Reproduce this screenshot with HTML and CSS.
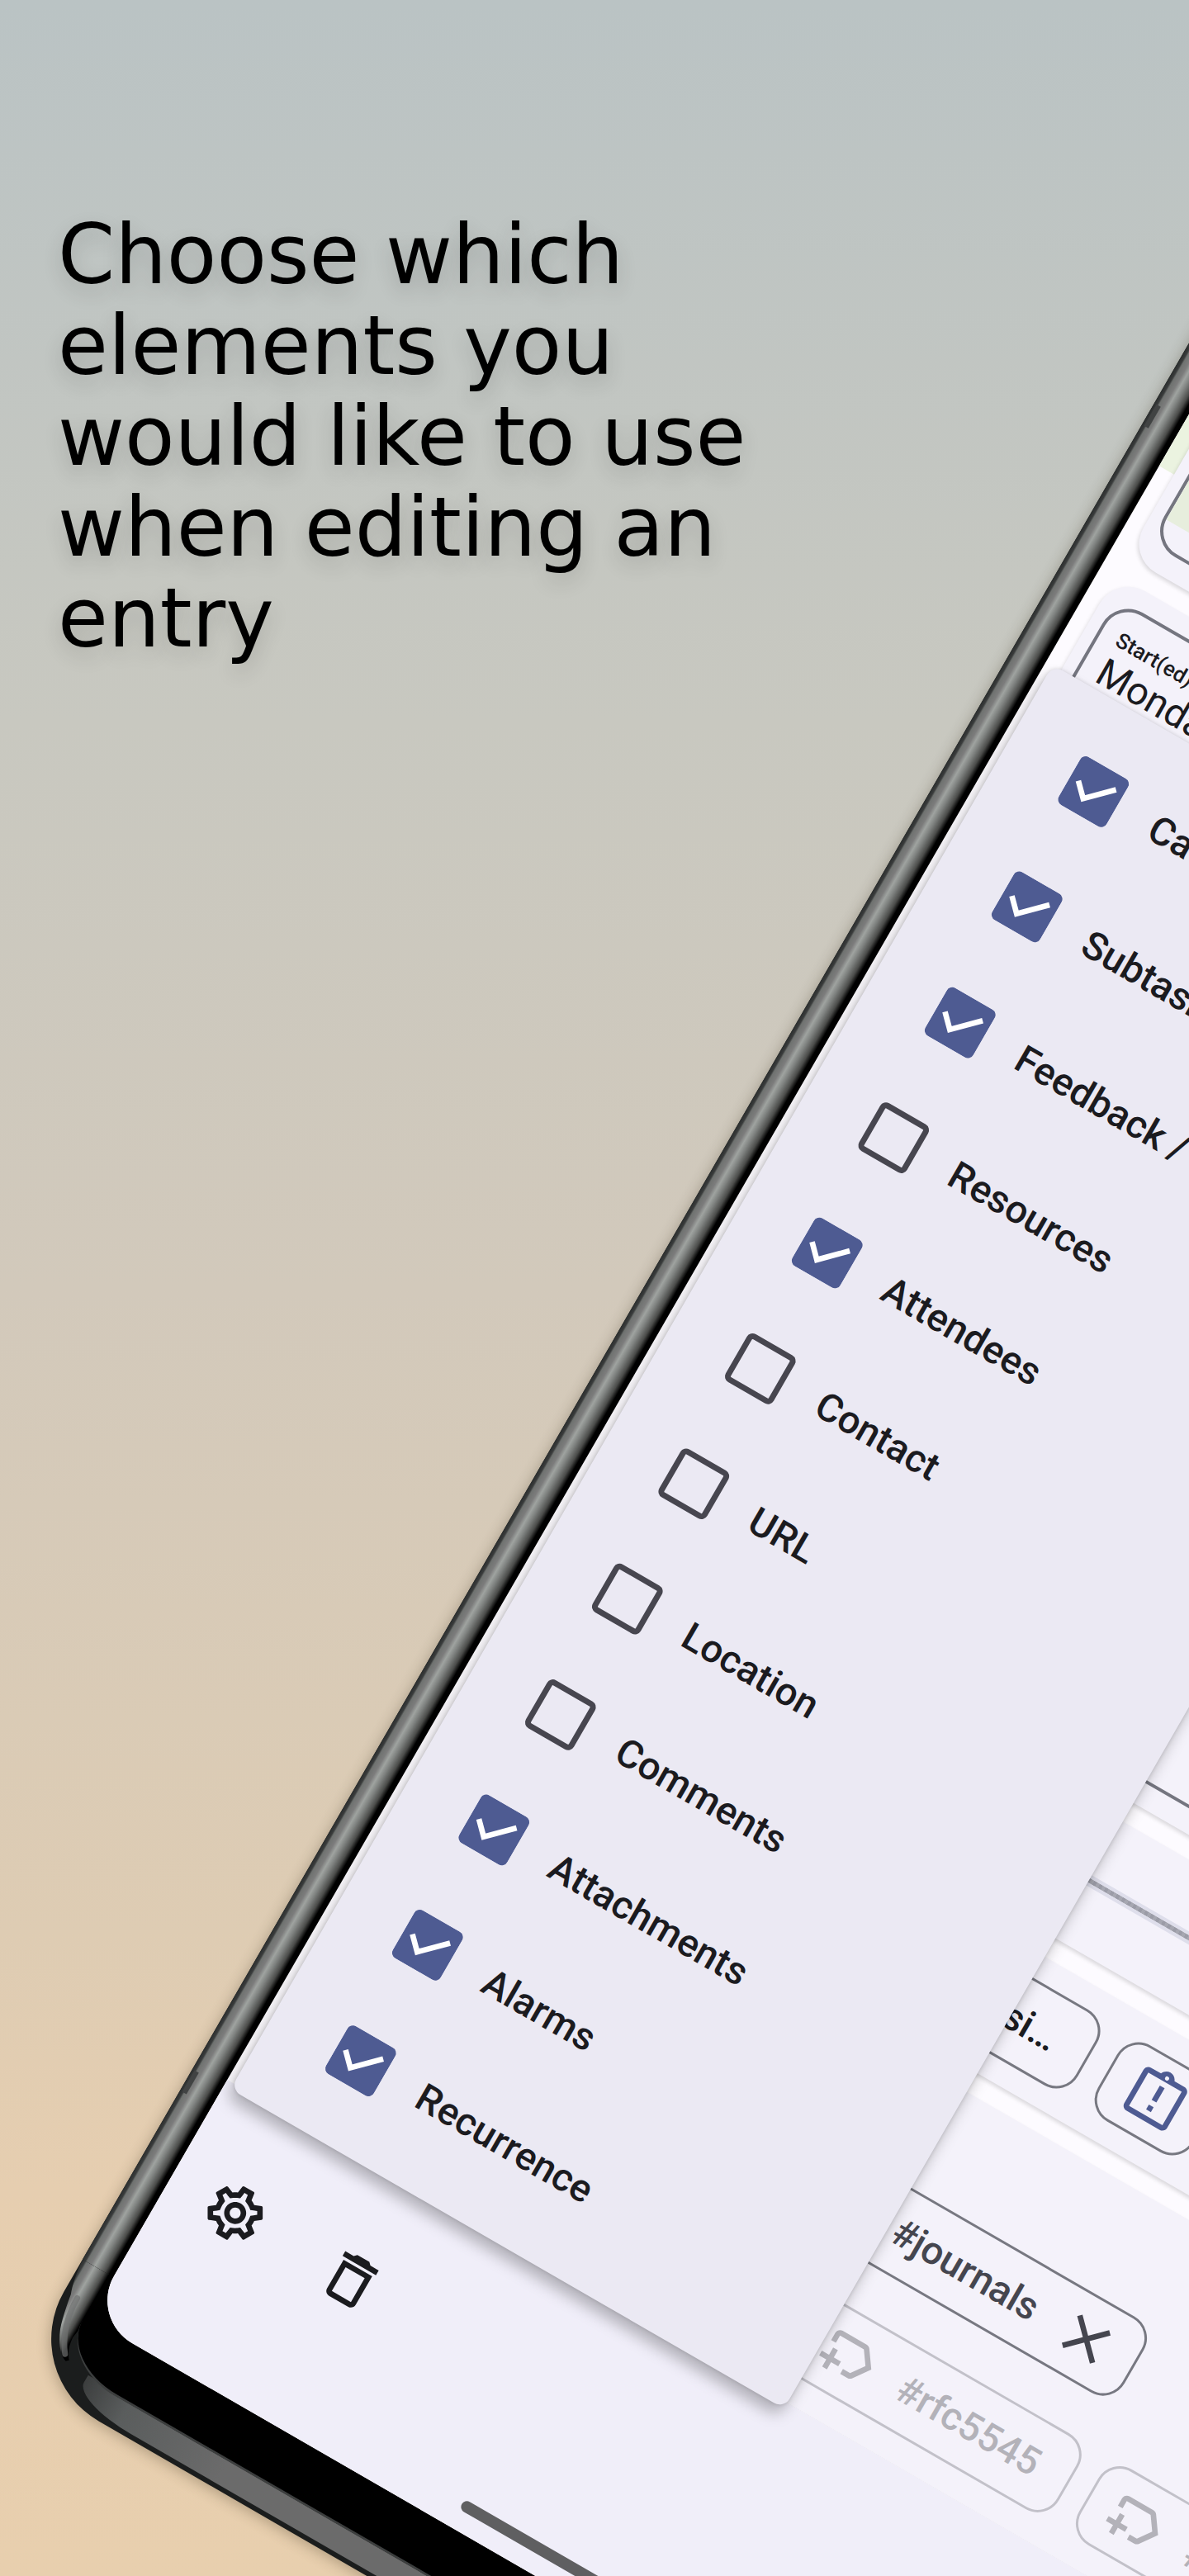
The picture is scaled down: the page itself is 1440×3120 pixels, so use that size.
FILE: index.html
```html
<!DOCTYPE html>
<html lang="en">
<head>
  <meta charset="utf-8">
  <meta name="viewport" content="width=device-width, initial-scale=1">
  <title>Choose which elements you would like to use</title>
  <link rel="stylesheet" href="styles.css">
</head>
<body>
  <main class="hero">
    <h1 class="headline">Choose which<br>elements you<br>would like to use<br>when editing an<br>entry</h1>

    <div class="phone">
      <div class="rail-side"></div>
      <div class="rail-bottom"></div>
      <svg class="rail-corner" viewBox="0 0 300 160" aria-hidden="true">
        <defs>
          <linearGradient id="side" gradientUnits="userSpaceOnUse" x1="0" y1="0" x2="44" y2="0">
            <stop offset="0" stop-color="#2b2e2e"/>
            <stop offset=".09" stop-color="#3a3c3c"/>
            <stop offset=".14" stop-color="#6f7270"/>
            <stop offset=".27" stop-color="#7c7c7c"/>
            <stop offset=".39" stop-color="#9fa3a0"/>
            <stop offset=".52" stop-color="#7e817f"/>
            <stop offset=".7" stop-color="#4b4c4a"/>
            <stop offset=".84" stop-color="#000"/>
          </linearGradient>
        </defs>
        <path fill="url(#side)" d="M0 0C2 20 5 34 9 44C12 62 15 76 19 87C26 104 35 114 44 117L47 114C40 106 38 98 37 88L44 40V0z"/>
        <path fill="none" stroke="#6f7170" stroke-opacity=".7" stroke-width="7" stroke-linecap="round" d="M18 44C18 70 25 92 39 110"/>
      </svg>
      <div class="bezel"></div>
      <span class="antenna antenna-high"></span>
      <span class="antenna antenna-low"></span>

      <div class="screen">
        <div class="content">
          <section class="card card-map">
            <div class="field"><div class="map"></div></div>
          </section>
          <section class="card card-details">
            <div class="field field-date">
              <span class="field-label">Start(ed)</span>
              <span class="field-value">Monday</span>
            </div>
          </section>
          <section class="card card-progress">
            <div class="track"></div>
          </section>
          <section class="card card-status">
            <button class="chip chip-class" type="button">si…</button>
            <button class="chip" type="button" aria-label="Priority">
              <svg class="icon icon-blue" viewBox="0 0 24 24"><path fill-rule="evenodd" d="M19 3h-4.18C14.4 1.84 13.3 1 12 1s-2.4.84-2.82 2H5c-1.1 0-2 .9-2 2v14c0 1.1.9 2 2 2h14c1.1 0 2-.9 2-2V5c0-1.1-.9-2-2-2zM5 5h14v14H5zM12 2.75a.75.75 0 1 1 0 1.5.75.75 0 0 1 0-1.5z"/><path d="M11 15h2v2h-2zM11 7h2v6h-2z"/></svg>
            </button>
          </section>
          <section class="card card-categories">
            <div class="chip-row">
              <button class="chip chip-selected" type="button">#journals
                <svg class="icon" viewBox="0 0 24 24"><path d="M19 6.41L17.59 5 12 10.59 6.41 5 5 6.41 10.59 12 5 17.59 6.41 19 12 13.41 17.59 19 19 17.59 13.41 12z"/></svg>
              </button>
            </div>
            <div class="chip-row">
              <button class="chip chip-suggestion" type="button">
                <svg class="icon" viewBox="0 0 24 24"><path d="M21 12l-4.37 6.16c-.37.52-.98.84-1.63.84h-3v-2h3l3.55-5L15 7H5v3H3V7c0-1.1.9-2 2-2h10c.65 0 1.26.31 1.63.84L21 12zM10 15H7v-3H5v3H2v2h3v3h2v-3h3v-2z"/></svg>
                #rfc5545
              </button>
              <button class="chip chip-suggestion" type="button">
                <svg class="icon" viewBox="0 0 24 24"><path d="M21 12l-4.37 6.16c-.37.52-.98.84-1.63.84h-3v-2h3l3.55-5L15 7H5v3H3V7c0-1.1.9-2 2-2h10c.65 0 1.26.31 1.63.84L21 12zM10 15H7v-3H5v3H2v2h3v3h2v-3h3v-2z"/></svg>
                #
              </button>
            </div>
          </section>
        </div>

        <footer class="bar">
          <button class="bar-button" type="button" aria-label="Settings">
            <svg class="icon" viewBox="0 0 24 24"><path d="M19.43 12.98c.04-.32.07-.64.07-.98s-.03-.66-.07-.98l2.11-1.65c.19-.15.24-.42.12-.64l-2-3.46c-.09-.16-.26-.25-.44-.25-.06 0-.12.01-.17.03l-2.49 1c-.52-.4-1.08-.73-1.69-.98l-.38-2.65C14.46 2.18 14.25 2 14 2h-4c-.25 0-.46.18-.49.42l-.38 2.65c-.61.25-1.17.59-1.69.98l-2.49-1c-.06-.02-.12-.03-.18-.03-.17 0-.34.09-.43.25l-2 3.46c-.13.22-.07.49.12.64l2.11 1.65c-.04.32-.07.65-.07.98s.03.66.07.98l-2.11 1.65c-.19.15-.24.42-.12.64l2 3.46c.09.16.26.25.44.25.06 0 .12-.01.17-.03l2.49-1c.52.4 1.08.73 1.69.98l.38 2.65c.03.24.24.42.49.42h4c.25 0 .46-.18.49-.42l.38-2.65c.61-.25 1.17-.59 1.69-.98l2.49 1c.06.02.12.03.18.03.17 0 .34-.09.43-.25l2-3.46c.12-.22.07-.49-.12-.64l-2.11-1.65zm-1.98-1.71c.04.31.05.52.05.73 0 .21-.02.43-.05.73l-.14 1.13.89.7 1.08.84-.7 1.21-1.27-.51-1.04-.42-.9.68c-.43.32-.84.56-1.25.73l-1.06.43-.16 1.13-.2 1.35h-1.4l-.19-1.35-.16-1.13-1.06-.43c-.43-.18-.83-.41-1.23-.71l-.91-.7-1.06.43-1.27.51-.7-1.21 1.08-.84.89-.7-.14-1.13c-.03-.31-.05-.54-.05-.74s.02-.43.05-.73l.14-1.13-.89-.7-1.08-.84.7-1.21 1.27.51 1.04.42.9-.68c.43-.32.84-.56 1.25-.73l1.06-.43.16-1.13.2-1.35h1.39l.19 1.35.16 1.13 1.06.43c.43.18.83.41 1.23.71l.91.7 1.06-.43 1.27-.51.7 1.21-1.07.85-.89.7.14 1.13zM12 8c-2.21 0-4 1.79-4 4s1.79 4 4 4 4-1.79 4-4-1.79-4-4-4zm0 6c-1.1 0-2-.9-2-2s.9-2 2-2 2 .9 2 2-.9 2-2 2z"/></svg>
          </button>
          <button class="bar-button" type="button" aria-label="Delete">
            <svg class="icon" viewBox="0 0 24 24"><path d="M16 9v10H8V9h8m-1.5-6h-5l-1 1H5v2h14V4h-3.5l-1-1zM18 7H6v12c0 1.1.9 2 2 2h8c1.1 0 2-.9 2-2V7z"/></svg>
          </button>
          <div class="nav-handle"></div>
        </footer>

        <div class="menu">
          <label class="option"><input type="checkbox" checked>Categories</label>
          <label class="option"><input type="checkbox" checked>Subtasks</label>
          <label class="option"><input type="checkbox" checked>Feedback /</label>
          <label class="option"><input type="checkbox">Resources</label>
          <label class="option"><input type="checkbox" checked>Attendees</label>
          <label class="option"><input type="checkbox">Contact</label>
          <label class="option"><input type="checkbox">URL</label>
          <label class="option"><input type="checkbox">Location</label>
          <label class="option"><input type="checkbox">Comments</label>
          <label class="option"><input type="checkbox" checked>Attachments</label>
          <label class="option"><input type="checkbox" checked>Alarms</label>
          <label class="option"><input type="checkbox" checked>Recurrence</label>
        </div>
      </div>
    </div>
  </main>
</body>
</html>
```
FILE: styles.css
```css
* {
  box-sizing: border-box;
}

body {
  margin: 0;
  font-family: Roboto, "Liberation Sans", sans-serif;
}

.hero {
  position: relative;
  min-height: 100vh;
  padding: 254px 70px;
  overflow: hidden;
  background: linear-gradient(#bac3c4, #c8c8c0 28%, #d2c9bb 50%, #deccb3 75%, #e6ceb0 85%, #e8cfae);
}

.headline {
  margin: 0;
  color: #000;
  font: 400 99px/110px "DejaVu Sans", Inter, sans-serif;
  text-shadow: 0 10px 24px rgba(0, 0, 0, 0.16);
}

/* The device hangs off its lower left corner and leans to the right. */
.phone {
  position: absolute;
  left: 20px;
  bottom: 245px;
  width: 1468px;
  height: 3200px;
  padding: 43px 43px 102px;
  border-radius: 115px;
  background: #1b1d1d;
  box-shadow: 0 4px 16px rgba(60, 50, 30, 0.3);
  transform: rotate(30deg);
  transform-origin: left bottom;
}

.rail-side,
.rail-bottom,
.rail-corner,
.bezel,
.antenna {
  position: absolute;
}

.rail-side {
  inset: 0 auto 160px 0;
  width: 44px;
  background: linear-gradient(to right, #2b2e2e 0, #3a3c3c 4px, #6f7270 6px, #7c7c7c 12px, #9fa3a0 17px, #7e817f 23px, #4b4c4a 31px, #000 37px);
}

.rail-bottom {
  inset: auto 60px 6px 76px;
  height: 36px;
  border-radius: 0 0 0 80px / 0 0 0 26px;
  background: linear-gradient(to right, #3c3e3e, #5a5d5d 60px, #6b6b6b 200px);
}

.rail-corner {
  bottom: 0;
  left: 0;
  width: 300px;
  height: 160px;
}

.bezel {
  inset: 37px 37px 36px;
  border-bottom: 3px solid #3c3e3e;
  border-radius: 84px 84px 84px 80px / 84px 84px 84px 60px;
  background: #000;
}

.antenna {
  left: 3px;
  width: 6px;
  height: 30px;
  background: #414343;
}

.antenna-high {
  bottom: 2726px;
}

.antenna-low {
  bottom: 396px;
}

.screen {
  position: relative;
  display: flex;
  flex-direction: column;
  height: 100%;
  overflow: hidden;
  border-radius: 60px;
  background: #fdfbff;
}

.content {
  display: flex;
  flex: 1;
  flex-direction: column;
  justify-content: flex-end;
  gap: 26px;
  min-height: 0;
  padding: 0 21px;
  overflow: hidden;
  background: linear-gradient(#ebf3e0, #ebf3e0) top / 100% 464px no-repeat;
}

.card {
  flex: none;
  border-radius: 40px;
  background: #f4f2fa;
  box-shadow: 0 3px 5px rgba(0, 0, 0, 0.14);
}

.field {
  height: 100%;
  overflow: hidden;
  border: 4px solid #74757f;
  border-radius: 36px;
}

.card-map {
  height: 520px;
  padding: 28px 15px;
}

.map {
  height: 426px;
  background: #e7eedd;
}

.card-details {
  height: 1278px;
  padding: 24px 15px 28px;
}

.field-date {
  display: flex;
  flex-direction: column;
  padding: 22px 21px;
  color: #1b1b1f;
}

.field-label {
  font-size: 26px;
  font-weight: 500;
  line-height: 32px;
}

.field-value {
  font-size: 47px;
  line-height: 54px;
}

.card-progress {
  display: flex;
  flex-direction: column;
  justify-content: center;
  height: 163px;
  padding: 0 40px;
}

.track {
  height: 14px;
  border: solid #dedeeb;
  border-width: 4px 0;
  background: repeating-linear-gradient(to right, #9b9ca7 0 4px, #a6a7b1 4px 8px);
}

.card-status {
  display: flex;
  align-items: center;
  gap: 28px;
  height: 163px;
  padding: 0 0 0 640px;
}

.chip {
  display: flex;
  flex: none;
  align-items: center;
  gap: 27px;
  height: 106px;
  padding: 0 24px;
  border: 3px solid #777881;
  border-radius: 30px;
  background: transparent;
  color: #1b1b1f;
  font: 500 47px/54px Roboto, "Liberation Sans", sans-serif;
  white-space: nowrap;
}

.chip-class {
  justify-content: flex-end;
  width: 229px;
  padding: 0 42px;
}

.icon {
  flex: none;
  width: 80px;
  height: 80px;
  fill: currentColor;
}

.icon-blue {
  color: #4e5b92;
}

.card-categories {
  display: flex;
  flex-direction: column;
  gap: 56px;
  padding: 134px 0 33px 733px;
  border-radius: 40px 40px 0 0;
}

.chip-row {
  display: flex;
  gap: 28px;
}

.chip-selected {
  gap: 30px;
  padding-left: 34px;
  color: #45464f;
}

.chip-suggestion {
  gap: 30px;
  padding-right: 40px;
  border-color: #c2c1c9;
  color: #b3b2b9;
}

.bar {
  position: relative;
  display: flex;
  flex: none;
  align-items: flex-start;
  height: 334px;
  padding: 54px 8px;
  background: #f0eef9;
}

.bar-button {
  display: grid;
  place-items: center;
  width: 162px;
  height: 162px;
  padding: 0;
  border: 0;
  background: transparent;
  color: #1b1b1f;
}

.nav-handle {
  position: absolute;
  bottom: 24px;
  left: 50%;
  width: 376px;
  height: 14px;
  border-radius: 7px;
  background: #5f5f61;
  transform: translateX(-50%);
}

.menu {
  position: absolute;
  bottom: 326px;
  left: 9px;
  display: grid;
  grid-auto-rows: 1fr;
  width: 774px;
  height: 1992px;
  padding: 28px 0;
  border-radius: 14px;
  background: #ebe9f3;
  box-shadow: 0 12px 18px rgba(0, 0, 0, 0.26), 0 0 5px rgba(0, 0, 0, 0.14);
}

.option {
  display: flex;
  align-items: center;
  gap: 48px;
  padding-left: 86px;
  color: #1b1b1f;
  font-size: 47px;
  font-weight: 500;
  line-height: 54px;
  white-space: nowrap;
}

.option input {
  flex: none;
  width: 67px;
  height: 67px;
  margin: 0;
  border: 7px solid #47464f;
  border-radius: 8px;
  appearance: none;
}

.option input:checked {
  border: 0;
  background: #4e5b92 url("data:image/svg+xml,%3Csvg xmlns='http://www.w3.org/2000/svg' viewBox='0 0 20 20'%3E%3Cpath d='M4 10l4 4 8-8' fill='none' stroke='%23fff' stroke-width='2' stroke-linecap='square'/%3E%3C/svg%3E") center / 100% no-repeat;
}
```
